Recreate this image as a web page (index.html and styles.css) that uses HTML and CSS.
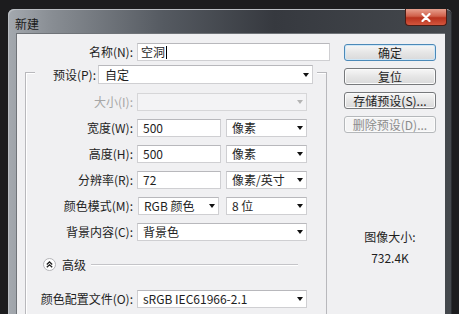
FILE: index.html
```html
<!DOCTYPE html>
<html lang="zh-CN">
<head>
    <meta charset="UTF-8">
    <title>新建</title>
    <link rel="stylesheet" href="styles.css">
</head>
<body>
    <div class="window">
        <div class="titlebar">
            <span class="title">新建</span>
            <span class="close">
                <svg width="10" height="9" viewBox="0 0 10 9"><path d="M1.5 1 L8.5 8 M8.5 1 L1.5 8" stroke="#fff" stroke-width="2.2" stroke-linecap="round"/></svg>
            </span>
        </div>
        <div class="content">
            <div class="main">
                <div class="row name-row">
                    <label class="lbl">名称(N):</label>
                    <div class="field name-field">空洞<span class="caret"></span></div>
                </div>
                <div class="group">
                    <div class="row preset-row">
                        <label class="lbl">预设(P):</label>
                        <div class="field select preset-field">自定<i class="arrow"></i></div>
                    </div>
                    <div class="row">
                        <label class="lbl disabled">大小(I):</label>
                        <div class="field select full off"><i class="arrow"></i></div>
                    </div>
                    <div class="row">
                        <label class="lbl">宽度(W):</label>
                        <div class="field num">500</div>
                        <div class="field select unit">像素<i class="arrow"></i></div>
                    </div>
                    <div class="row">
                        <label class="lbl">高度(H):</label>
                        <div class="field num">500</div>
                        <div class="field select unit">像素<i class="arrow"></i></div>
                    </div>
                    <div class="row">
                        <label class="lbl">分辨率(R):</label>
                        <div class="field num">72</div>
                        <div class="field select unit">像素/英寸<i class="arrow"></i></div>
                    </div>
                    <div class="row">
                        <label class="lbl">颜色模式(M):</label>
                        <div class="field select mode">RGB 颜色<i class="arrow"></i></div>
                        <div class="field select unit">8 位<i class="arrow"></i></div>
                    </div>
                    <div class="row">
                        <label class="lbl">背景内容(C):</label>
                        <div class="field select full">背景色<i class="arrow"></i></div>
                    </div>
                    <div class="advanced">
                        <span class="toggle">
                            <svg width="7" height="7" viewBox="0 0 7 7"><path d="M0.8 3.4 L3.5 0.9 L6.2 3.4 M0.8 6.3 L3.5 3.8 L6.2 6.3" fill="none" stroke="#222" stroke-width="1.3"/></svg>
                        </span>
                        <span class="adv-label">高级</span>
                        <span class="sep"></span>
                    </div>
                    <div class="row">
                        <label class="lbl">颜色配置文件(O):</label>
                        <div class="field select full">sRGB IEC61966-2.1<i class="arrow"></i></div>
                    </div>
                </div>
            </div>
            <div class="side">
                <div class="btn default">确定</div>
                <div class="btn">复位</div>
                <div class="btn">存储预设(S)...</div>
                <div class="btn off">删除预设(D)...</div>
                <div class="info">
                    <div>图像大小:</div>
                    <div>732.4K</div>
                </div>
            </div>
        </div>
    </div>
</body>
</html>
```

FILE: styles.css
```css
body {
    margin: 0;
    height: 314px;
    overflow: hidden;
    background: #1c1c1e;
    font-family: "Noto Sans CJK SC", "Noto Sans", sans-serif;
    font-size: 12px;
    color: #1e1e1e;
}
.window {
    box-sizing: border-box;
    width: 444px;
    height: 305px;
    margin: 9px 0 0 8px;
    padding: 0 7px 0 8px;
    border-radius: 6px 6px 0 0;
    background: linear-gradient(90deg, #a4a9af 0, #888d93 10%, #555a61 35%, #36393f 60%, #44484d 100%);
    box-shadow: inset 1px 1px 0 #b9bdc2, inset -1px 0 0 #2a2d31;
}
.titlebar {
    display: flex;
    justify-content: space-between;
    align-items: flex-start;
    height: 24px;
    margin: 0 -7px 0 -8px;
    padding: 0 5px 0 7px;
}
.title {
    margin-top: 7px;
    line-height: 16px;
    color: #1a1a1a;
}
.close {
    display: flex;
    align-items: center;
    justify-content: center;
    box-sizing: border-box;
    width: 42px;
    height: 17px;
    border: 1px solid #4a1d16;
    border-top: none;
    border-radius: 0 0 4px 4px;
    background: linear-gradient(#e7a08f, #d0604a 45%, #b8321e 55%, #d4563d);
}
.content {
    display: flex;
    height: 281px;
    overflow: hidden;
    background: #f0f0f2;
    box-shadow: inset 1px 1px 0 #6f7378;
}
.main {
    width: 314px;
    padding-top: 10px;
}
.row {
    display: flex;
    align-items: center;
    height: 18px;
    margin-top: 8px;
}
.lbl {
    width: 107px;
    margin-right: 4px;
    text-align: right;
    line-height: 16px;
}
.lbl.disabled {
    color: #a6a6a6;
}
.name-row {
    margin-top: 0;
}
.name-row .lbl {
    width: 117px;
}
.field {
    display: flex;
    align-items: center;
    box-sizing: border-box;
    height: 18px;
    padding-left: 5px;
    line-height: 16px;
    background: #fff;
    border: 1px solid #cfcfd2;
    border-top-color: #b8b8bc;
}
.name-field {
    width: 193px;
    padding-left: 3px;
}
.caret {
    width: 1px;
    height: 13px;
    margin-left: 1px;
    background: #000;
}
.select {
    padding-right: 3px;
}
.arrow {
    width: 0;
    height: 0;
    margin-left: auto;
    border-left: 3.5px solid transparent;
    border-right: 3.5px solid transparent;
    border-top: 4px solid #111;
}
.off .arrow {
    border-top-color: #b4b4b4;
}
.field.off {
    background: #f3f3f5;
    border-color: #d6d6d8;
}
.group {
    box-sizing: border-box;
    width: 302px;
    height: 300px;
    margin: 11px 0 0 9px;
    border: 1px solid #b8b8bc;
    box-shadow: inset 1px 1px 0 #fff;
}
.preset-row {
    width: 280px;
    height: 19px;
    margin: -8px 0 0 9px;
    padding-right: 2px;
    background: #f0f0f2;
}
.preset-row .lbl {
    width: 61px;
    margin-right: 2px;
}
.preset-field {
    width: 215px;
    height: 19px;
    padding-left: 6px;
}
.group > .row:nth-child(2) {
    margin-top: 9px;
}
.full {
    width: 170px;
}
.num {
    width: 84px;
}
.unit {
    width: 81px;
    margin-left: 5px;
}
.mode {
    width: 81px;
    margin-left: 1px;
}
.mode + .unit {
    margin-left: 7px;
}
.advanced {
    display: flex;
    align-items: center;
    height: 13px;
    margin: 17px 28px 0 17px;
}
.toggle {
    display: flex;
    align-items: center;
    justify-content: center;
    box-sizing: border-box;
    width: 13px;
    height: 13px;
    border: 1px solid #b4b4b8;
    border-radius: 50%;
    background: #fff;
}
.adv-label {
    margin-left: 6px;
    line-height: 16px;
}
.sep {
    flex: 1;
    margin-left: 5px;
    border-top: 1px solid #c4c4c8;
    border-bottom: 1px solid #fff;
}
.advanced + .row {
    margin-top: 19px;
}
.side {
    width: 92px;
    margin-left: 14px;
    padding-top: 11px;
}
.btn {
    box-sizing: border-box;
    height: 17px;
    margin-bottom: 7px;
    line-height: 15px;
    text-align: center;
    border: 1px solid #77797c;
    border-radius: 3px;
    background: linear-gradient(#f7f7f7, #e6e6e6 50%, #d9d9da);
    box-shadow: inset 0 0 0 1px #fbfbfb;
}
.btn.default {
    border-color: #4b89b8;
    box-shadow: inset 0 0 0 1px #cfe7f7;
}
.btn.off {
    color: #8c8c8c;
    border-color: #b5b8bb;
    background: #f4f4f5;
}
.info {
    margin-top: 93px;
    text-align: center;
    line-height: 21px;
    color: #1e1e1e;
}
```
